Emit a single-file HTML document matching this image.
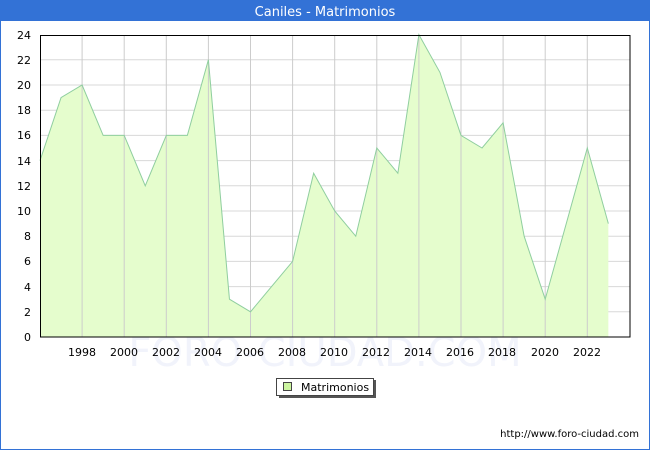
<!DOCTYPE html>
<html><head><meta charset="utf-8"><style>
html,body{margin:0;padding:0;background:#fff}
body{width:650px;height:450px;position:relative;overflow:hidden;font-family:"DejaVu Sans","Liberation Sans",sans-serif}
</style></head><body>
<svg width="650" height="450" xmlns="http://www.w3.org/2000/svg" style="position:absolute;left:0;top:0">
<rect x="0.5" y="0.5" width="649" height="449" fill="#fff" stroke="#3372d6"/>
<rect x="0" y="0" width="650" height="21" fill="#3372d6"/>
<text x="325" y="16" text-anchor="middle" fill="#fff" font-size="13" font-family="DejaVu Sans,sans-serif">Caniles - Matrimonios</text>
<text x="325" y="366" text-anchor="middle" fill="#f1f3fb" font-size="40" font-family="DejaVu Sans,sans-serif">FORO-CIUDAD.COM</text>
<g stroke="#d8d8d8" stroke-width="1">
<line x1="40" x2="630" y1="311.8" y2="311.8"/><line x1="40" x2="630" y1="286.6" y2="286.6"/><line x1="40" x2="630" y1="261.4" y2="261.4"/><line x1="40" x2="630" y1="236.2" y2="236.2"/><line x1="40" x2="630" y1="211" y2="211"/><line x1="40" x2="630" y1="185.8" y2="185.8"/><line x1="40" x2="630" y1="160.6" y2="160.6"/><line x1="40" x2="630" y1="135.4" y2="135.4"/><line x1="40" x2="630" y1="110.2" y2="110.2"/><line x1="40" x2="630" y1="85" y2="85"/><line x1="40" x2="630" y1="59.8" y2="59.8"/>
</g>
<polygon fill="#e5fdcd" stroke="none" points="40,337 40,160.6 61.05,97.6 82.1,85 103.15,135.4 124.2,135.4 145.25,185.8 166.3,135.4 187.35,135.4 208.4,59.8 229.45,299.2 250.5,311.8 271.55,286.6 292.6,261.4 313.65,173.2 334.7,211 355.75,236.2 376.8,148 397.85,173.2 418.9,34.6 439.95,72.4 461,135.4 482.05,148 503.1,122.8 524.15,236.2 545.2,299.2 566.25,223.6 587.3,148 608.35,223.6 608.35,337"/>
<g stroke="#cccccc" stroke-width="1">
<line y1="35" y2="337" x1="82.1" x2="82.1"/><line y1="35" y2="337" x1="124.2" x2="124.2"/><line y1="35" y2="337" x1="166.3" x2="166.3"/><line y1="35" y2="337" x1="208.4" x2="208.4"/><line y1="35" y2="337" x1="250.5" x2="250.5"/><line y1="35" y2="337" x1="292.6" x2="292.6"/><line y1="35" y2="337" x1="334.7" x2="334.7"/><line y1="35" y2="337" x1="376.8" x2="376.8"/><line y1="35" y2="337" x1="418.9" x2="418.9"/><line y1="35" y2="337" x1="461" x2="461"/><line y1="35" y2="337" x1="503.1" x2="503.1"/><line y1="35" y2="337" x1="545.2" x2="545.2"/><line y1="35" y2="337" x1="587.3" x2="587.3"/>
</g>
<polyline fill="none" stroke="#8fce9f" stroke-width="1" points="40,160.6 61.05,97.6 82.1,85 103.15,135.4 124.2,135.4 145.25,185.8 166.3,135.4 187.35,135.4 208.4,59.8 229.45,299.2 250.5,311.8 271.55,286.6 292.6,261.4 313.65,173.2 334.7,211 355.75,236.2 376.8,148 397.85,173.2 418.9,34.6 439.95,72.4 461,135.4 482.05,148 503.1,122.8 524.15,236.2 545.2,299.2 566.25,223.6 587.3,148 608.35,223.6"/>
<rect x="40.5" y="35.5" width="589.5" height="301.5" fill="none" stroke="#000"/>
<g font-size="11" fill="#000" text-anchor="end" font-family="DejaVu Sans,sans-serif">
<text x="31" y="341">0</text><text x="31" y="316">2</text><text x="31" y="291">4</text><text x="31" y="265">6</text><text x="31" y="240">8</text><text x="31" y="215">10</text><text x="31" y="190">12</text><text x="31" y="165">14</text><text x="31" y="139">16</text><text x="31" y="114">18</text><text x="31" y="89">20</text><text x="31" y="64">22</text><text x="31" y="39">24</text>
</g>
<g font-size="11" fill="#000" text-anchor="middle" font-family="DejaVu Sans,sans-serif">
<text x="82" y="356">1998</text><text x="124" y="356">2000</text><text x="166" y="356">2002</text><text x="208" y="356">2004</text><text x="250" y="356">2006</text><text x="292" y="356">2008</text><text x="334" y="356">2010</text><text x="376" y="356">2012</text><text x="418" y="356">2014</text><text x="460" y="356">2016</text><text x="502" y="356">2018</text><text x="545" y="356">2020</text><text x="587" y="356">2022</text>
</g>
<rect x="279" y="380" width="97" height="18" fill="#555"/>
<rect x="276.5" y="378.5" width="97" height="17" fill="#fff" stroke="#444"/>
<rect x="283.5" y="382.5" width="8" height="8" fill="#ccf5a0" stroke="#444"/>
<text x="301" y="391" font-size="11" font-family="DejaVu Sans,sans-serif">Matrimonios</text>
<text x="639" y="437" text-anchor="end" font-size="10" font-family="DejaVu Sans,sans-serif">http://www.foro-ciudad.com</text>
</svg>
</body></html>
